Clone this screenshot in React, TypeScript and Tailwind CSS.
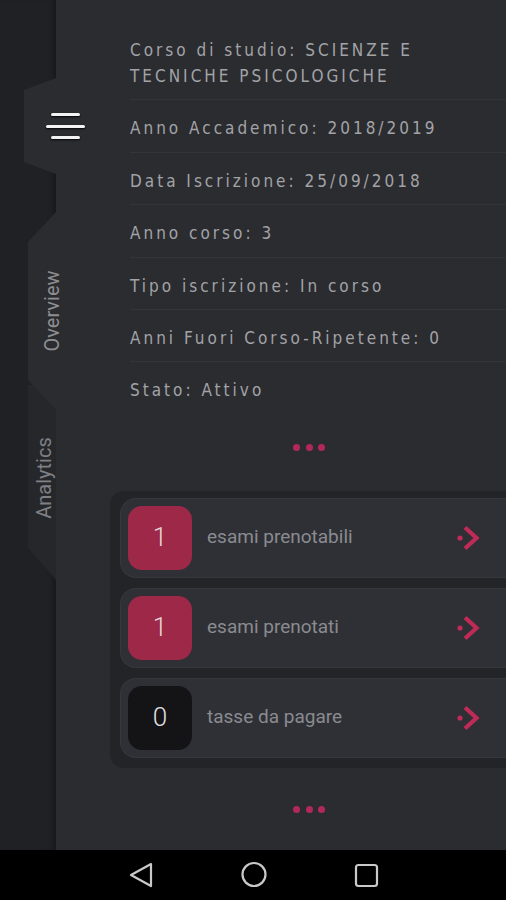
import type { ReactNode } from "react";

type InfoRow = { text: string };

type CounterRow = {
  count: number;
  label: string;
  tone: "accent" | "dark";
};

const infoRows: InfoRow[] = [
  { text: "Corso di studio: SCIENZE E TECNICHE PSICOLOGICHE" },
  { text: "Anno Accademico: 2018/2019" },
  { text: "Data Iscrizione: 25/09/2018" },
  { text: "Anno corso: 3" },
  { text: "Tipo iscrizione: In corso" },
  { text: "Anni Fuori Corso-Ripetente: 0" },
  { text: "Stato: Attivo" }
];

const counterRows: CounterRow[] = [
  { count: 1, label: "esami prenotabili", tone: "accent" },
  { count: 1, label: "esami prenotati", tone: "accent" },
  { count: 0, label: "tasse da pagare", tone: "dark" }
];

function Dots(): JSX.Element {
  return (
    <div className="flex items-center gap-[5.5px] pl-[237px]">
      <span className="h-[7px] w-[7px] rounded-full bg-[#b3285a]" />
      <span className="h-[7px] w-[7px] rounded-full bg-[#b3285a]" />
      <span className="h-[7px] w-[7px] rounded-full bg-[#b3285a]" />
    </div>
  );
}

function ArrowIcon(): JSX.Element {
  return (
    <svg viewBox="0 0 28 28" className="h-[28px] w-[28px]" fill="none">
      <circle cx="5" cy="14" r="2.6" fill="#bf2a56" />
      <path d="M10 3.5 L21.5 14 L10 24.5" stroke="#bf2a56" strokeWidth="4.2" strokeLinejoin="miter" />
    </svg>
  );
}

function Tab({
  size,
  clip,
  color,
  className,
  children
}: {
  size: string;
  clip: string;
  color: string;
  className?: string;
  children?: ReactNode;
}): JSX.Element {
  return (
    <div className={`relative ml-auto ${size} ${className ?? ""}`}>
      <div className={`absolute inset-0 ${color} ${clip}`} />
      <div className="relative h-full">{children}</div>
    </div>
  );
}

export default function App(): JSX.Element {
  return (
    <div className="flex h-[900px] w-[506px] flex-col overflow-hidden bg-[#2b2c30] font-['Roboto',sans-serif]">
      <div className="flex h-[850px]">
        {/* side rail */}
        <div className="relative z-10 flex w-[56px] shrink-0 flex-col bg-[#202124] shadow-[inset_-6px_0_6px_-4px_rgba(0,0,0,0.35)]">
          <div className="h-[78px]" />
          <Tab
            size="h-[96px] w-[32px]"
            color="bg-[#2b2c30]"
            clip="[clip-path:polygon(100%_0,0_12px,0_calc(100%-12px),100%_100%)]"
          >
            <div className="flex h-full w-[62px] flex-col items-center justify-center gap-[8.5px] pl-[20px]">
              <span className="h-[3px] w-[29px] rounded-full bg-[#f2f2f2] shadow-[0_1px_2px_rgba(0,0,0,0.9)]" />
              <span className="h-[3px] w-[39px] rounded-full bg-[#f2f2f2] shadow-[0_1px_2px_rgba(0,0,0,0.9)]" />
              <span className="h-[3px] w-[29px] rounded-full bg-[#f2f2f2] shadow-[0_1px_2px_rgba(0,0,0,0.9)]" />
            </div>
          </Tab>
          <div className="h-[38px]" />
          <Tab
            size="h-[198px] w-[28px]"
            color="bg-[#2b2c30]"
            className="z-20"
            clip="[clip-path:polygon(100%_0,0_30px,0_calc(100%-30px),100%_100%)]"
          >
            <div className="flex h-full w-[48px] items-center justify-center">
              <span className="-rotate-90 whitespace-nowrap text-[20px] text-[#8d8e92]">Overview</span>
            </div>
          </Tab>
          <Tab
            size="h-[195px] w-[28px]"
            color="bg-[#26272b]"
            className="-mt-[25px]"
            clip="[clip-path:polygon(0_0,100%_0,100%_100%,0_calc(100%-32px))]"
          >
            <div className="flex h-full w-[32px] items-center justify-center pb-[10px]">
              <span className="-rotate-90 whitespace-nowrap text-[20px] text-[#7f8084]">Analytics</span>
            </div>
          </Tab>
        </div>

        {/* main column */}
        <div className="flex flex-1 flex-col pt-[22px]">
          <div className="flex flex-col">
            {infoRows.map((row, i) => (
              <div
                key={row.text}
                className={`ml-[74px] pb-[10.4px] pr-[24px] pt-[15px] ${
                  i < infoRows.length - 1 ? "border-b border-[#34353a]" : ""
                }`}
              >
                <p className="font-['Liberation_Sans_Narrow','DejaVu_Sans_Condensed','Roboto_Condensed',sans-serif] text-[17px] leading-[26px] tracking-[3px] text-[#a2a3a7]">
                  {row.text}
                </p>
              </div>
            ))}
          </div>

          <div className="mt-[30px]">
            <Dots />
          </div>

          <div className="ml-[54px] mt-[40px] flex flex-col gap-[10px] rounded-l-[14px] bg-[#232428] pb-[10px] pl-[10px] pt-[7px]">
            {counterRows.map((row) => (
              <div
                key={row.label}
                className="flex h-[80px] items-center rounded-l-[16px] border border-r-0 border-[#37383d] bg-[#2f3035] pl-[7px]"
              >
                <div
                  className={`flex h-[64px] w-[64px] items-center justify-center rounded-[14px] text-[26px] font-light ${
                    row.tone === "accent" ? "bg-[#9e2848] text-[#e4d3d8]" : "bg-[#141417] text-[#e2e2e2]"
                  }`}
                >
                  {row.count}
                </div>
                <p className="ml-[15px] flex-1 text-[19px] text-[#8a8b90]">{row.label}</p>
                <div className="mr-[23px]">
                  <ArrowIcon />
                </div>
              </div>
            ))}
          </div>

          <div className="mt-[38px]">
            <Dots />
          </div>
        </div>
      </div>

      {/* system nav bar */}
      <div className="flex h-[50px] items-center bg-black">
        <svg viewBox="0 0 506 50" className="h-[50px] w-[506px]" fill="none" stroke="#c9c9c9" strokeWidth="2.2">
          <path d="M151 14 L131 25 L151 36 Z" strokeLinejoin="round" />
          <circle cx="254" cy="24.5" r="11.5" />
          <rect x="356" y="15" width="21" height="21" rx="2.5" />
        </svg>
      </div>
    </div>
  );
}
